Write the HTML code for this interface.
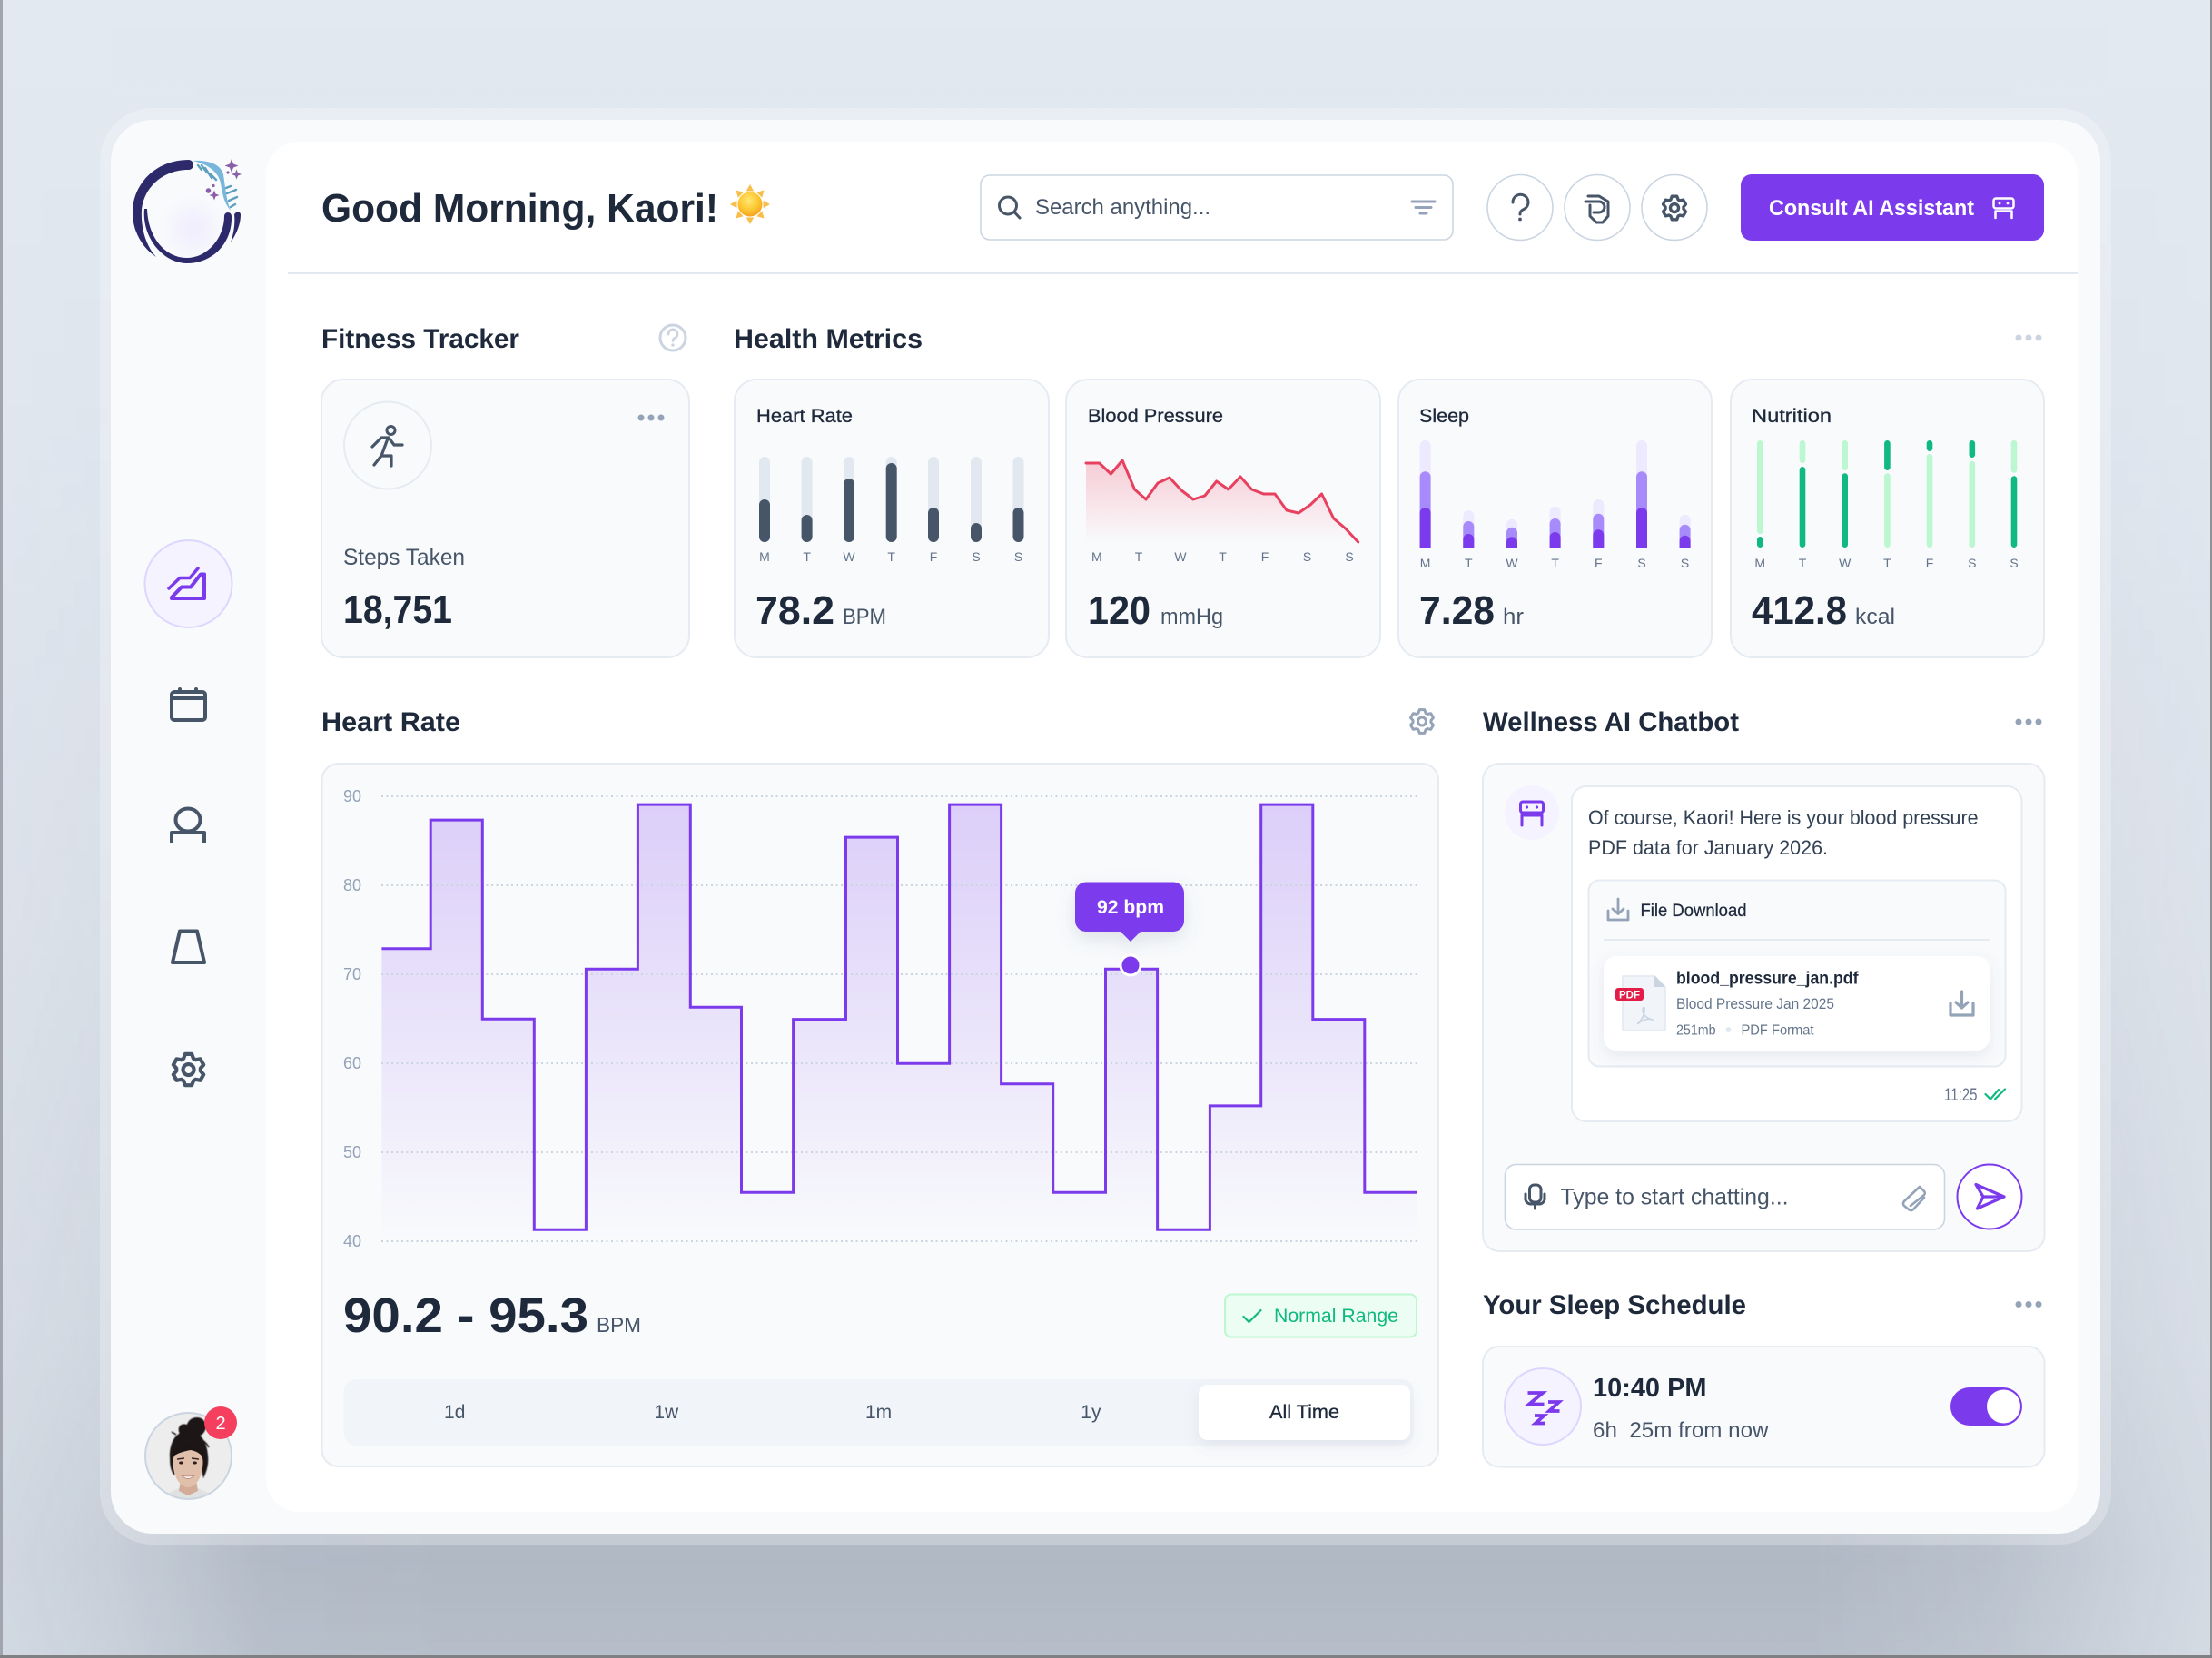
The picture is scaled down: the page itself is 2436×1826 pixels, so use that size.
<!DOCTYPE html>
<html lang="en">
<head>
<meta charset="utf-8">
<title>Wellness Dashboard</title>
<style>
html,body{margin:0;padding:0;background:#e2e8f0;width:2436px;height:1826px;overflow:hidden}
svg{display:block}
text{font-family:"Liberation Sans",Arial,sans-serif}
.h{font-weight:700;fill:#1e293b}
.t{font-size:30px;font-weight:700;fill:#1e293b}
.v{font-size:44px;font-weight:700;fill:#1e293b}
.u{font-size:24px;fill:#475569}
.n{font-size:21px;font-weight:400;fill:#1e293b;stroke:#1e293b;stroke-width:.3}
.d{font-size:14px;fill:#64748b;text-anchor:middle}
.y{font-size:18px;fill:#94a3b8}
.tab{font-size:21px;fill:#475569;text-anchor:middle}
.card{fill:#f8fafc;stroke:#e6ebf2;stroke-width:2}
.ic{fill:none;stroke:#475569;stroke-linecap:round;stroke-linejoin:round}
.pu{fill:none;stroke:#7c3aed;stroke-linecap:round;stroke-linejoin:round}
.gr{fill:none;stroke:#94a3b8;stroke-linecap:round;stroke-linejoin:round}
</style>
</head>
<body>
<svg xmlns="http://www.w3.org/2000/svg" width="2436" height="1826" viewBox="0 0 2436 1826">
<defs>
<linearGradient id="bg" x1="0" y1="0" x2="0" y2="1"><stop offset="0" stop-color="#e3e9f1"/><stop offset="1" stop-color="#dfe5ed"/></linearGradient>
<linearGradient id="shf" gradientUnits="userSpaceOnUse" x1="0" y1="0" x2="0" y2="1826"><stop offset="0" stop-color="#475569" stop-opacity="0"/><stop offset=".25" stop-color="#475569" stop-opacity=".03"/><stop offset=".55" stop-color="#475569" stop-opacity=".11"/><stop offset=".8" stop-color="#475569" stop-opacity=".2"/><stop offset=".94" stop-color="#475569" stop-opacity=".31"/><stop offset="1" stop-color="#475569" stop-opacity=".27"/></linearGradient>
<linearGradient id="shm" gradientUnits="userSpaceOnUse" x1="0" y1="0" x2="2436" y2="0"><stop offset="0" stop-color="#fff" stop-opacity=".3"/><stop offset=".05" stop-color="#fff" stop-opacity=".5"/><stop offset=".12" stop-color="#fff" stop-opacity=".95"/><stop offset=".2" stop-color="#fff"/><stop offset=".82" stop-color="#fff"/><stop offset=".9" stop-color="#fff" stop-opacity=".8"/><stop offset=".97" stop-color="#fff" stop-opacity=".4"/><stop offset="1" stop-color="#fff" stop-opacity=".25"/></linearGradient>
<mask id="shmask" maskUnits="userSpaceOnUse" x="0" y="0" width="2436" height="1826"><rect width="2436" height="1826" fill="url(#shm)"/></mask>
<filter id="b2" x="-50%" y="-50%" width="200%" height="200%"><feGaussianBlur stdDeviation="10"/></filter>
<filter id="b1" x="-20%" y="-20%" width="140%" height="140%"><feGaussianBlur stdDeviation=".6"/></filter>
<filter id="sh" x="-20%" y="-30%" width="140%" height="170%"><feDropShadow dx="0" dy="6" stdDeviation="8" flood-color="#64748b" flood-opacity=".12"/></filter>
<filter id="sht" x="-30%" y="-30%" width="160%" height="190%"><feDropShadow dx="0" dy="8" stdDeviation="10" flood-color="#64748b" flood-opacity=".18"/></filter>
<linearGradient id="ar" gradientUnits="userSpaceOnUse" x1="0" y1="886" x2="0" y2="1367"><stop offset="0" stop-color="#7c3aed" stop-opacity=".23"/><stop offset=".75" stop-color="#7c3aed" stop-opacity=".06"/><stop offset="1" stop-color="#7c3aed" stop-opacity="0"/></linearGradient>
<linearGradient id="bp" gradientUnits="userSpaceOnUse" x1="0" y1="507" x2="0" y2="597"><stop offset="0" stop-color="#f43f5e" stop-opacity=".25"/><stop offset="1" stop-color="#f43f5e" stop-opacity="0"/></linearGradient>
<radialGradient id="sun" cx=".45" cy=".35" r=".7"><stop offset="0" stop-color="#ffe873"/><stop offset=".55" stop-color="#fdc832"/><stop offset="1" stop-color="#f49c1e"/></radialGradient>
<clipPath id="sl"><rect x="1550" y="470" width="330" height="133"/></clipPath>
<clipPath id="av"><circle cx="207.5" cy="1603.5" r="47"/></clipPath>
<g id="gear"><path d="M8.75 4.69 9.82 1.73 14.18 1.73 15.25 4.69 16.7 5.53 19.8 4.97 21.98 8.76 19.96 11.16V12.84L21.98 15.24 19.8 19.03 16.7 18.47 15.25 19.31 14.18 22.27H9.82L8.75 19.31 7.3 18.47 4.2 19.03 2.02 15.24 4.04 12.84V11.16L2.02 8.76 4.2 4.97 7.3 5.53Z"/><circle cx="12" cy="12" r="3.6"/></g>
<path id="ray" d="M826 203 821.800 210.500H830.200Z" fill="#f7bf4a"/>
</defs>

<!-- page background -->
<rect width="2436" height="1826" fill="url(#bg)"/>
<rect width="2436" height="1826" fill="url(#shf)" mask="url(#shmask)"/>
<rect x="0" y="0" width="3" height="1826" fill="#a0a5af"/>
<rect x="2434" y="0" width="2" height="1826" fill="#8e9197"/>
<rect x="0" y="1823" width="2436" height="3" fill="#7f8083"/>

<!-- outer frame -->
<rect x="110" y="119" width="2215" height="1582" rx="58" fill="#fff" fill-opacity=".25"/>
<rect x="122" y="132" width="2191" height="1557" rx="46" fill="#f8fafc"/>
<rect x="293" y="156" width="1995" height="1509" rx="36" fill="#fff"/>

<!-- logo -->
<ellipse cx="213" cy="252" rx="22" ry="24" fill="#ede9fe" opacity=".7" filter="url(#b2)"/>
<g fill="#2d2a6b">
<path d="M208 176C170 176 146 204 146 234C146 256 158 274 172 283C160 270 155 250 156 232C158 206 180 187 207 187A5.5 5.5 0 0 0 208 176Z"/>
<path d="M159 230C156 262 180 290 206 290C234 290 256 268 255 238A4 4 0 0 0 247 238C247 262 228 284 206 284C182 284 163 262 162 230Z"/>
<path d="M259 235A3.300 3.300 0 0 1 265 236C265 248 260 258 254 267C258 255 259 245 258 236Z"/>
</g>
<path d="M212 177C230 176 243 181 246 192C248 205 249 220 254 232C247 224 245 214 243 202C241 190 230 181 212 177Z" fill="#78b6dc"/>
<g stroke="#5d9fbe" stroke-width="2.400" stroke-linecap="round">
<path d="M218 182 222 187M222 182 228 190M226 185 233 196M232 192 238 198M249 207 254 205M250 213 260 209M252 221 261 217M254 228 259 225"/>
</g>
<g fill="#8a5ea8">
<path d="M255 175 257 180.500 262.500 182.500 257 184.500 255 190 253 184.500 247.500 182.500 253 180.500Z"/>
<path d="M260.500 186.500 262 190.500 266 192 262 193.500 260.500 197.500 259 193.500 255 192 259 190.500Z"/>
<path d="M236 209.500 237.500 213.500 241.500 215 237.500 216.500 236 220.500 234.500 216.500 230.500 215 234.500 213.500Z"/>
<circle cx="229.500" cy="210" r="2.800"/><circle cx="235" cy="204.500" r="1.600"/><circle cx="251" cy="190" r="1.600"/>
</g>

<!-- sidebar -->
<circle cx="207.500" cy="643" r="48" fill="#f5f3ff" stroke="#ddd6fe" stroke-width="2"/>
<path class="pu" stroke-width="4" d="M189 658 200 646.500H210L221 632.500H225V659H189Z"/>
<path class="pu" stroke-width="3.500" stroke-linecap="butt" d="M186 648 198 636.500H209L218 626"/>
<g class="ic" stroke-width="4">
<rect x="189" y="762" width="37" height="31" rx="3"/>
<path d="M189 769H226M198 759V762M216 759V762"/>
<ellipse cx="207" cy="903" rx="13.500" ry="12.500"/>
<path d="M189 928V917H225V928" stroke-linecap="butt"/>
<path d="M198 1025.500H217L225 1060H190Z"/>
</g>
<use href="#gear" class="ic" stroke-width="2.500" transform="translate(187.500 1158) scale(1.67)"/>

<!-- avatar -->
<g clip-path="url(#av)">
<rect x="155" y="1550" width="105" height="105" fill="#ecedec"/>
<path d="M178 1655 186 1644 199 1638H216L229 1644 238 1655Z" fill="#e0e1e1"/>
<path d="M199 1630H216L218 1642 207 1647 197 1642Z" fill="#d3ab96"/>
<g filter="url(#b1)">
<path d="M207 1576C193 1576 186 1590 187 1606C187 1614 188 1620 192 1625L196 1610 220 1610 224 1628C228 1620 230 1612 229 1603C228 1588 221 1576 207 1576Z" fill="#1b1614"/>
<path d="M200 1582C193 1574 198 1566 206 1569C208 1561 218 1559 223 1563C229 1568 228 1578 219 1582Z" fill="#1d1816"/>
<path d="M204 1572C208 1566 216 1564 220 1567M218 1583C223 1586 227 1588 230 1594M194 1580 189 1577" stroke="#1d1816" stroke-width="1.500" fill="none"/>
</g>
<path d="M190.500 1610C190.500 1600 198 1596 207 1596C216 1596 223.500 1600 223.500 1610C223.500 1626 216 1638 207 1638C198 1638 190.500 1626 190.500 1610Z" fill="#e0bfab"/>
<path d="M190.500 1604C196 1600 204 1598 210 1597C216 1598 221 1601 223.500 1605C222 1595 214 1591 206 1591C198 1591 191 1596 190.500 1604Z" fill="#1b1614"/>
<path d="M195 1607 203 1606M211 1606 219 1607" stroke="#3a2a24" stroke-width="1.600" fill="none"/>
<ellipse cx="199.500" cy="1611" rx="2.400" ry="1.500" fill="#2a1e1a"/><ellipse cx="214.500" cy="1611" rx="2.400" ry="1.500" fill="#2a1e1a"/>
<path d="M200 1625Q207 1632 214 1625Q207 1627 200 1625Z" fill="#fff" stroke="#b87a70" stroke-width=".8"/>
</g>
<circle cx="207.500" cy="1603.500" r="47.500" fill="none" stroke="#cbd5e1" stroke-width="2"/>
<circle cx="243" cy="1567" r="18" fill="#f43f5e"/>
<text x="243" y="1574" font-size="20" fill="#fff" text-anchor="middle">2</text>

<!-- header -->
<text class="h" x="354" y="244" font-size="44" textLength="437" lengthAdjust="spacingAndGlyphs">Good Morning, Kaori!</text>
<g>
<use href="#ray"/><use href="#ray" transform="rotate(45 826 225)"/><use href="#ray" transform="rotate(90 826 225)"/><use href="#ray" transform="rotate(135 826 225)"/><use href="#ray" transform="rotate(180 826 225)"/><use href="#ray" transform="rotate(225 826 225)"/><use href="#ray" transform="rotate(270 826 225)"/><use href="#ray" transform="rotate(315 826 225)"/>
<circle cx="826" cy="225" r="13.500" fill="url(#sun)"/>
</g>
<rect x="1080" y="193" width="520" height="71" rx="10" fill="#fff" stroke="#cbd5e1" stroke-width="1.600"/>
<g class="ic" stroke-width="3"><circle cx="1110" cy="226.500" r="9.500"/><path d="M1117 233.500 1123 240"/></g>
<text x="1140" y="236" font-size="24" fill="#475569" textLength="193" lengthAdjust="spacingAndGlyphs">Search anything...</text>
<path class="gr" stroke-width="3" d="M1555 222H1580M1559 228.500H1576M1564 235H1571"/>
<circle cx="1674" cy="228.500" r="36" fill="#fff" stroke="#cbd5e1" stroke-width="1.600"/>
<circle cx="1759" cy="228.500" r="36" fill="#fff" stroke="#cbd5e1" stroke-width="1.600"/>
<circle cx="1844" cy="228.500" r="36" fill="#fff" stroke="#cbd5e1" stroke-width="1.600"/>
<g class="ic" stroke-width="3">
<path d="M1666 223A8.500 8.500 0 1 1 1678 230.500C1675.500 231.700 1674 233 1674 235.500V236"/>
<path d="M1746 222H1761A6 6 0 0 1 1761 234H1755M1751 226V238L1758 245H1765L1771 238V222L1761 216H1749"/>
</g>
<circle cx="1674" cy="241.500" r="1.900" fill="#475569"/>
<use href="#gear" class="ic" stroke-width="2.700" transform="translate(1829 214) scale(1.25)"/>
<rect x="1917" y="192" width="334" height="73" rx="12" fill="#7c3aed"/>
<text x="1948" y="237" font-size="24" font-weight="700" fill="#fff" textLength="226" lengthAdjust="spacingAndGlyphs">Consult AI Assistant</text>
<g fill="none" stroke="#fff" stroke-width="2.500" stroke-linejoin="round" stroke-linecap="round">
<rect x="2195.500" y="218.500" width="22" height="11" rx="2.500"/><path d="M2197.500 240V232.500H2215.500V240"/>
</g>
<circle cx="2202" cy="224" r="1.400" fill="#fff"/><circle cx="2211" cy="224" r="1.400" fill="#fff"/>
<rect x="317" y="300" width="1971" height="2" fill="#e2e8f0"/>

<!-- fitness tracker -->
<text class="t" x="354" y="383" textLength="218" lengthAdjust="spacingAndGlyphs">Fitness Tracker</text>
<circle cx="741" cy="372" r="14" fill="none" stroke="#cbd5e1" stroke-width="3"/>
<path d="M736 368A5 5 0 1 1 743 372.500C741.500 373.200 741 374 741 375.500" fill="none" stroke="#cbd5e1" stroke-width="2.800" stroke-linecap="round"/>
<circle cx="741" cy="380" r="1.700" fill="#cbd5e1"/>
<rect class="card" x="354" y="418" width="405" height="306" rx="24"/>
<circle cx="427" cy="490.500" r="48" fill="none" stroke="#e6ebf2" stroke-width="2"/>
<circle cx="430.500" cy="474" r="4.500" fill="none" stroke="#475569" stroke-width="3"/>
<path class="ic" stroke-width="3.200" d="M410 492 420 482H428L434 490H443M427 483 420 502 412 512M420 502H431V513"/>
<g fill="#94a3b8"><circle cx="706" cy="460" r="3.500"/><circle cx="717" cy="460" r="3.500"/><circle cx="728" cy="460" r="3.500"/></g>
<text x="378" y="622" font-size="25" fill="#475569" textLength="134" lengthAdjust="spacingAndGlyphs">Steps Taken</text>
<text class="v" x="378" y="686" textLength="120" lengthAdjust="spacingAndGlyphs">18,751</text>

<!-- health metrics -->
<text class="t" x="808" y="383" textLength="208" lengthAdjust="spacingAndGlyphs">Health Metrics</text>
<g fill="#cbd5e1"><circle cx="2223" cy="372" r="3.500"/><circle cx="2234" cy="372" r="3.500"/><circle cx="2245" cy="372" r="3.500"/></g>

<rect class="card" x="809" y="418" width="346" height="306" rx="24"/>
<rect class="card" x="1174" y="418" width="346" height="306" rx="24"/>
<rect class="card" x="1540" y="418" width="345" height="306" rx="24"/>
<rect class="card" x="1906" y="418" width="345" height="306" rx="24"/>

<text class="n" x="833" y="465" textLength="106" lengthAdjust="spacingAndGlyphs">Heart Rate</text>
<text class="n" x="1198" y="465" textLength="149" lengthAdjust="spacingAndGlyphs">Blood Pressure</text>
<text class="n" x="1563" y="465" textLength="55" lengthAdjust="spacingAndGlyphs">Sleep</text>
<text class="n" x="1929" y="465" textLength="88" lengthAdjust="spacingAndGlyphs">Nutrition</text>

<!-- heart bars -->
<g fill="#e2e8f0">
<rect x="836" y="503" width="12" height="94" rx="6"/><rect x="882.600" y="503" width="12" height="94" rx="6"/><rect x="929" y="503" width="12" height="94" rx="6"/><rect x="975.700" y="503" width="12" height="94" rx="6"/><rect x="1022" y="503" width="12" height="94" rx="6"/><rect x="1069" y="503" width="12" height="94" rx="6"/><rect x="1115.500" y="503" width="12" height="94" rx="6"/>
</g>
<g fill="#475569">
<rect x="836" y="550" width="12" height="47" rx="6"/><rect x="882.600" y="567" width="12" height="30" rx="6"/><rect x="929" y="527" width="12" height="70" rx="6"/><rect x="975.700" y="510" width="12" height="87" rx="6"/><rect x="1022" y="559" width="12" height="38" rx="6"/><rect x="1069" y="576" width="12" height="21" rx="6"/><rect x="1115.500" y="559" width="12" height="38" rx="6"/>
</g>
<text class="d" x="842" y="618">M</text><text class="d" x="888.600" y="618">T</text><text class="d" x="935" y="618">W</text><text class="d" x="981.700" y="618">T</text><text class="d" x="1028" y="618">F</text><text class="d" x="1075" y="618">S</text><text class="d" x="1121.500" y="618">S</text>
<text class="v" x="832" y="687" textLength="87" lengthAdjust="spacingAndGlyphs">78.2</text>
<text class="u" x="928" y="687" textLength="48" lengthAdjust="spacingAndGlyphs">BPM</text>

<!-- blood pressure -->
<path fill="url(#bp)" d="M1196 510H1210.700L1223.400 522 1236 507 1249.500 539 1262 550 1275 532 1288 526 1301 540 1314 550 1326.700 546 1339.700 530 1352.800 539 1366 525 1378.500 539 1391.600 544H1404L1417 562 1430 565 1443 556 1455.600 544 1468.700 571 1481.700 582 1495.700 597H1196Z"/>
<path fill="none" stroke="#e8405f" stroke-width="3" stroke-linejoin="round" stroke-linecap="round" d="M1196 510H1210.700L1223.400 522 1236 507 1249.500 539 1262 550 1275 532 1288 526 1301 540 1314 550 1326.700 546 1339.700 530 1352.800 539 1366 525 1378.500 539 1391.600 544H1404L1417 562 1430 565 1443 556 1455.600 544 1468.700 571 1481.700 582 1495.700 597"/>
<text class="d" x="1207.800" y="618">M</text><text class="d" x="1254" y="618">T</text><text class="d" x="1300" y="618">W</text><text class="d" x="1346.500" y="618">T</text><text class="d" x="1393" y="618">F</text><text class="d" x="1439.500" y="618">S</text><text class="d" x="1486" y="618">S</text>
<text class="v" x="1198" y="687" textLength="69" lengthAdjust="spacingAndGlyphs">120</text>
<text class="u" x="1278" y="687" textLength="69" lengthAdjust="spacingAndGlyphs">mmHg</text>

<!-- sleep -->
<g clip-path="url(#sl)">
<g fill="#ede9fe">
<path d="M1563.600 603V491a6 6 0 0 1 12 0V603ZM1611.300 603V568.300a6 6 0 0 1 12 0V603ZM1659 603V577.700a6 6 0 0 1 12 0V603ZM1706.600 603V563.700a6 6 0 0 1 12 0V603ZM1754.300 603V556a6 6 0 0 1 12 0V603ZM1802 603V491a6 6 0 0 1 12 0V603ZM1849.600 603V573a6 6 0 0 1 12 0V603Z"/>
</g>
<g fill="#a78bfa">
<path d="M1563.600 603V525.300a6 6 0 0 1 12 0V603ZM1611.300 603V580a6 6 0 0 1 12 0V603ZM1659 603V586.700a6 6 0 0 1 12 0V603ZM1706.600 603V577a6 6 0 0 1 12 0V603ZM1754.300 603V571.700a6 6 0 0 1 12 0V603ZM1802 603V525.300a6 6 0 0 1 12 0V603ZM1849.600 603V583.700a6 6 0 0 1 12 0V603Z"/>
</g>
<g fill="#7c3aed">
<path d="M1563.600 603V565a6 6 0 0 1 12 0V603ZM1611.300 603V594a6 6 0 0 1 12 0V603ZM1659 603V597.300a6 6 0 0 1 12 0V603ZM1706.600 603V592a6 6 0 0 1 12 0V603ZM1754.300 603V589.300a6 6 0 0 1 12 0V603ZM1802 603V565a6 6 0 0 1 12 0V603ZM1849.600 603V595.700a6 6 0 0 1 12 0V603Z"/>
</g>
</g>
<text class="d" x="1569.600" y="625">M</text><text class="d" x="1617.300" y="625">T</text><text class="d" x="1665" y="625">W</text><text class="d" x="1712.600" y="625">T</text><text class="d" x="1760.300" y="625">F</text><text class="d" x="1808" y="625">S</text><text class="d" x="1855.600" y="625">S</text>
<text class="v" x="1563" y="687" textLength="83" lengthAdjust="spacingAndGlyphs">7.28</text>
<text class="u" x="1655" y="687" textLength="23" lengthAdjust="spacingAndGlyphs">hr</text>

<!-- nutrition -->
<g fill="#bbf7d0">
<rect x="1935" y="485" width="6.600" height="103" rx="3.300"/><rect x="1981.700" y="485" width="6.600" height="25" rx="3.300"/><rect x="2028.400" y="485" width="6.600" height="33" rx="3.300"/><rect x="2075.100" y="521.300" width="6.600" height="81.700" rx="3.300"/><rect x="2121.700" y="500" width="6.600" height="103" rx="3.300"/><rect x="2168.500" y="507.700" width="6.600" height="95.300" rx="3.300"/><rect x="2214.700" y="485" width="6.600" height="35.700" rx="3.300"/>
</g>
<g fill="#10b981">
<rect x="1935" y="591" width="6.600" height="12" rx="3.300"/><rect x="1981.700" y="514" width="6.600" height="89" rx="3.300"/><rect x="2028.400" y="521.300" width="6.600" height="81.700" rx="3.300"/><rect x="2075.100" y="485" width="6.600" height="33" rx="3.300"/><rect x="2121.700" y="485" width="6.600" height="12" rx="3.300"/><rect x="2168.500" y="485" width="6.600" height="19" rx="3.300"/><rect x="2214.700" y="524.300" width="6.600" height="78.700" rx="3.300"/>
</g>
<text class="d" x="1938.200" y="625">M</text><text class="d" x="1985" y="625">T</text><text class="d" x="2031.700" y="625">W</text><text class="d" x="2078.400" y="625">T</text><text class="d" x="2125" y="625">F</text><text class="d" x="2171.800" y="625">S</text><text class="d" x="2218" y="625">S</text>
<text class="v" x="1929" y="687" textLength="105" lengthAdjust="spacingAndGlyphs">412.8</text>
<text class="u" x="2043" y="687" textLength="44" lengthAdjust="spacingAndGlyphs">kcal</text>

<!-- heart rate chart -->
<text class="t" x="354" y="805" textLength="153" lengthAdjust="spacingAndGlyphs">Heart Rate</text>
<use href="#gear" class="gr" stroke-width="2.400" transform="translate(1551 779.500) scale(1.25)"/>
<rect class="card" x="354.500" y="841" width="1229.500" height="774" rx="18"/>
<path fill="url(#ar)" d="M420.400 1044.700H474.200V903.100H531.300V1122.200H588.300V1354.300H645.400V1067.200H702.400V886.100H760.300V1109.200H816.500V1313.200H873.600V1122.600H931.500V922.100H988.500V1171.200H1045.600V886.100H1102.600V1193.800H1159.700V1313.200H1217.500V1067.200H1274.600V1354.300H1332.400V1217.900H1388.700V886.100H1445.800V1122.600H1502.800V1313.200H1560V1367H420.400Z"/>
<g stroke="#cbd5e1" stroke-width="2" stroke-dasharray="2 3.500" fill="none">
<path d="M420 877H1560M420 975H1560M420 1073H1560M420 1171H1560M420 1269H1560M420 1367H1560"/>
</g>
<path fill="none" stroke="#7c3aed" stroke-width="3" stroke-linejoin="miter" d="M420.400 1044.700H474.200V903.100H531.300V1122.200H588.300V1354.300H645.400V1067.200H702.400V886.100H760.300V1109.200H816.500V1313.200H873.600V1122.600H931.500V922.100H988.500V1171.200H1045.600V886.100H1102.600V1193.800H1159.700V1313.200H1217.500V1067.200H1274.600V1354.300H1332.400V1217.900H1388.700V886.100H1445.800V1122.600H1502.800V1313.200H1560"/>
<text class="y" x="378" y="883">90</text><text class="y" x="378" y="981">80</text><text class="y" x="378" y="1079">70</text><text class="y" x="378" y="1177">60</text><text class="y" x="378" y="1275">50</text><text class="y" x="378" y="1373">40</text>
<g filter="url(#sht)">
<rect x="1184" y="971.500" width="120" height="54.500" rx="12" fill="#7c3aed"/>
<path d="M1233 1025 1245 1037 1257 1025Z" fill="#7c3aed"/>
</g>
<text x="1208" y="1006" font-size="21" font-weight="700" fill="#fff" textLength="74" lengthAdjust="spacingAndGlyphs">92 bpm</text>
<circle cx="1245" cy="1063" r="11" fill="#7c3aed" stroke="#fff" stroke-width="3"/>

<text x="378" y="1467" font-size="54" font-weight="700" fill="#1e293b" textLength="270" lengthAdjust="spacingAndGlyphs">90.2 - 95.3</text>
<text x="657" y="1467" font-size="23" fill="#475569" textLength="49" lengthAdjust="spacingAndGlyphs">BPM</text>
<rect x="1349" y="1425.500" width="211" height="47" rx="7" fill="#ecfdf3" stroke="#bbf7d0" stroke-width="2"/>
<path fill="none" stroke="#10b981" stroke-width="2.200" stroke-linecap="round" stroke-linejoin="round" d="M1369.500 1450 1375.500 1456 1388.500 1443"/>
<text x="1403" y="1456" font-size="21" fill="#10b981" textLength="137" lengthAdjust="spacingAndGlyphs">Normal Range</text>
<rect x="378.500" y="1519" width="1178.500" height="73" rx="14" fill="#f1f5f9"/>
<rect x="1320" y="1525" width="233" height="61" rx="10" fill="#fff" filter="url(#sh)"/>
<text class="tab" x="500.700" y="1562">1d</text><text class="tab" x="733.800" y="1562">1w</text><text class="tab" x="967.600" y="1562">1m</text><text class="tab" x="1201.400" y="1562">1y</text>
<text x="1398" y="1562" font-size="21" fill="#1e293b" stroke="#1e293b" stroke-width=".3" textLength="77" lengthAdjust="spacingAndGlyphs">All Time</text>

<!-- chatbot -->
<text class="t" x="1633" y="805" textLength="282" lengthAdjust="spacingAndGlyphs">Wellness AI Chatbot</text>
<g fill="#94a3b8"><circle cx="2223" cy="795" r="3.500"/><circle cx="2234" cy="795" r="3.500"/><circle cx="2245" cy="795" r="3.500"/></g>
<rect class="card" x="1633" y="841" width="618.500" height="537" rx="18"/>
<circle cx="1687" cy="895" r="30" fill="#f5f3ff"/>
<g class="pu" stroke-width="3">
<rect x="1674.500" y="883" width="25" height="12" rx="2.500"/><path d="M1676 909V898H1698V909"/>
</g>
<circle cx="1681.500" cy="889" r="1.600" fill="#7c3aed"/><circle cx="1692.500" cy="889" r="1.600" fill="#7c3aed"/>
<rect x="1731" y="866" width="495.500" height="369" rx="16" fill="#fff" stroke="#e6ebf2" stroke-width="2"/>
<text x="1749" y="908" font-size="22" fill="#334155" textLength="429.500" lengthAdjust="spacingAndGlyphs">Of course, Kaori! Here is your blood pressure</text>
<text x="1749" y="941" font-size="22" fill="#334155" textLength="264" lengthAdjust="spacingAndGlyphs">PDF data for January 2026.</text>
<rect x="1749.500" y="969.500" width="459" height="205" rx="12" fill="#f8fafc" stroke="#e6ebf2" stroke-width="2"/>
<path class="gr" stroke-width="2.800" d="M1771 1003V1013H1793V1003M1782 990V1006M1776 1001 1782 1006.500 1788 1001"/>
<text x="1806.500" y="1009" font-size="19" fill="#1e293b" stroke="#1e293b" stroke-width=".25" textLength="117" lengthAdjust="spacingAndGlyphs">File Download</text>
<rect x="1766" y="1034" width="425" height="2" fill="#e6ebf2"/>
<rect x="1766" y="1053" width="425" height="104" rx="14" fill="#fff" filter="url(#sh)"/>
<path d="M1787 1075H1822L1834 1087V1133A2 2 0 0 1 1832 1135H1789A2 2 0 0 1 1787 1133Z" fill="#f1f5f9" stroke="#e2e8f0" stroke-width="1.500"/>
<path d="M1822 1074 1834 1087H1822Z" fill="#cbd5e1"/>
<rect x="1779" y="1088" width="31" height="14" rx="3" fill="#e11d48"/>
<text x="1794.500" y="1099.500" font-size="12" font-weight="700" fill="#fff" text-anchor="middle" textLength="23" lengthAdjust="spacingAndGlyphs">PDF</text>
<path fill="none" stroke="#cbd5e1" stroke-width="1.600" d="M1803 1128C1808 1124 1812 1116 1811 1110 1809 1108 1808 1113 1811 1118 1814 1122 1818 1122 1821 1124 1818 1121 1810 1122 1803 1128Z"/>
<text x="1846" y="1083.500" font-size="19" font-weight="700" fill="#1e293b" textLength="200.500" lengthAdjust="spacingAndGlyphs">blood_pressure_jan.pdf</text>
<text x="1846" y="1111" font-size="16.500" fill="#64748b" textLength="174" lengthAdjust="spacingAndGlyphs">Blood Pressure Jan 2025</text>
<text x="1846" y="1139.500" font-size="16" fill="#64748b" textLength="43.500" lengthAdjust="spacingAndGlyphs">251mb</text>
<circle cx="1903.500" cy="1134" r="3" fill="#e2e8f0"/>
<text x="1917.500" y="1139.500" font-size="16" fill="#64748b" textLength="80" lengthAdjust="spacingAndGlyphs">PDF Format</text>
<path class="gr" stroke-width="3.200" d="M2148 1105V1118H2173V1105M2160.500 1092V1110M2154 1104 2160.500 1110 2167 1104"/>
<text x="2141" y="1212" font-size="19" fill="#64748b" textLength="36.500" lengthAdjust="spacingAndGlyphs">11:25</text>
<path fill="none" stroke="#10b981" stroke-width="2.200" stroke-linecap="round" stroke-linejoin="round" d="M2186.500 1205 2192 1210.500 2201 1200M2197 1210.500 2208 1199.500"/>
<rect x="1657.500" y="1282.500" width="484" height="71.500" rx="12" fill="#fff" stroke="#cbd5e1" stroke-width="1.600"/>
<g class="ic" stroke-width="3">
<rect x="1684.500" y="1305" width="12.500" height="19" rx="5"/>
<path d="M1680 1315V1319A6 6 0 0 0 1686 1326H1695A6 6 0 0 0 1701 1319V1315M1690.500 1326V1331"/>
</g>
<text x="1718.500" y="1326.500" font-size="25" fill="#475569" textLength="251" lengthAdjust="spacingAndGlyphs">Type to start chatting...</text>
<path class="gr" stroke-width="2.600" d="M2114 1307 2097 1323A3.500 3.500 0 0 0 2097 1328L2102 1332A3.500 3.500 0 0 0 2107 1332L2119 1319M2114 1307 2119 1312A3 3 0 0 1 2119 1316L2104 1328"/>
<circle cx="2191" cy="1318" r="35.500" fill="#fff" stroke="#7c3aed" stroke-width="2"/>
<path class="pu" stroke-width="3.200" d="M2176 1304.500 2207 1318 2177.500 1331 2184 1318ZM2184 1318H2207"/>

<!-- sleep schedule -->
<text class="t" x="1633" y="1447" textLength="290" lengthAdjust="spacingAndGlyphs">Your Sleep Schedule</text>
<g fill="#94a3b8"><circle cx="2223" cy="1436.500" r="3.500"/><circle cx="2234" cy="1436.500" r="3.500"/><circle cx="2245" cy="1436.500" r="3.500"/></g>
<rect class="card" x="1633" y="1483" width="618.500" height="132.500" rx="18"/>
<circle cx="1699" cy="1549" r="42" fill="#f5f3ff" stroke="#ddd6fe" stroke-width="2"/>
<g fill="none" stroke="#7c3aed" stroke-width="3.800" stroke-linejoin="miter">
<path d="M1682.500 1534H1699L1684 1546.500H1700.500"/>
<path d="M1705 1544H1717L1706 1554H1717.500"/>
<path d="M1690 1559H1700.500L1691 1567.500H1701.500"/>
</g>
<text x="1754" y="1538" font-size="29" font-weight="700" fill="#1e293b" textLength="125.500" lengthAdjust="spacingAndGlyphs">10:40 PM</text>
<text x="1754" y="1583" font-size="24" fill="#475569" textLength="193.500" lengthAdjust="spacingAndGlyphs" xml:space="preserve">6h  25m from now</text>
<rect x="2148" y="1528" width="79" height="42" rx="21" fill="#7c3aed"/>
<circle cx="2206.500" cy="1549" r="18.500" fill="#fff"/>
</svg>
</body>
</html>
